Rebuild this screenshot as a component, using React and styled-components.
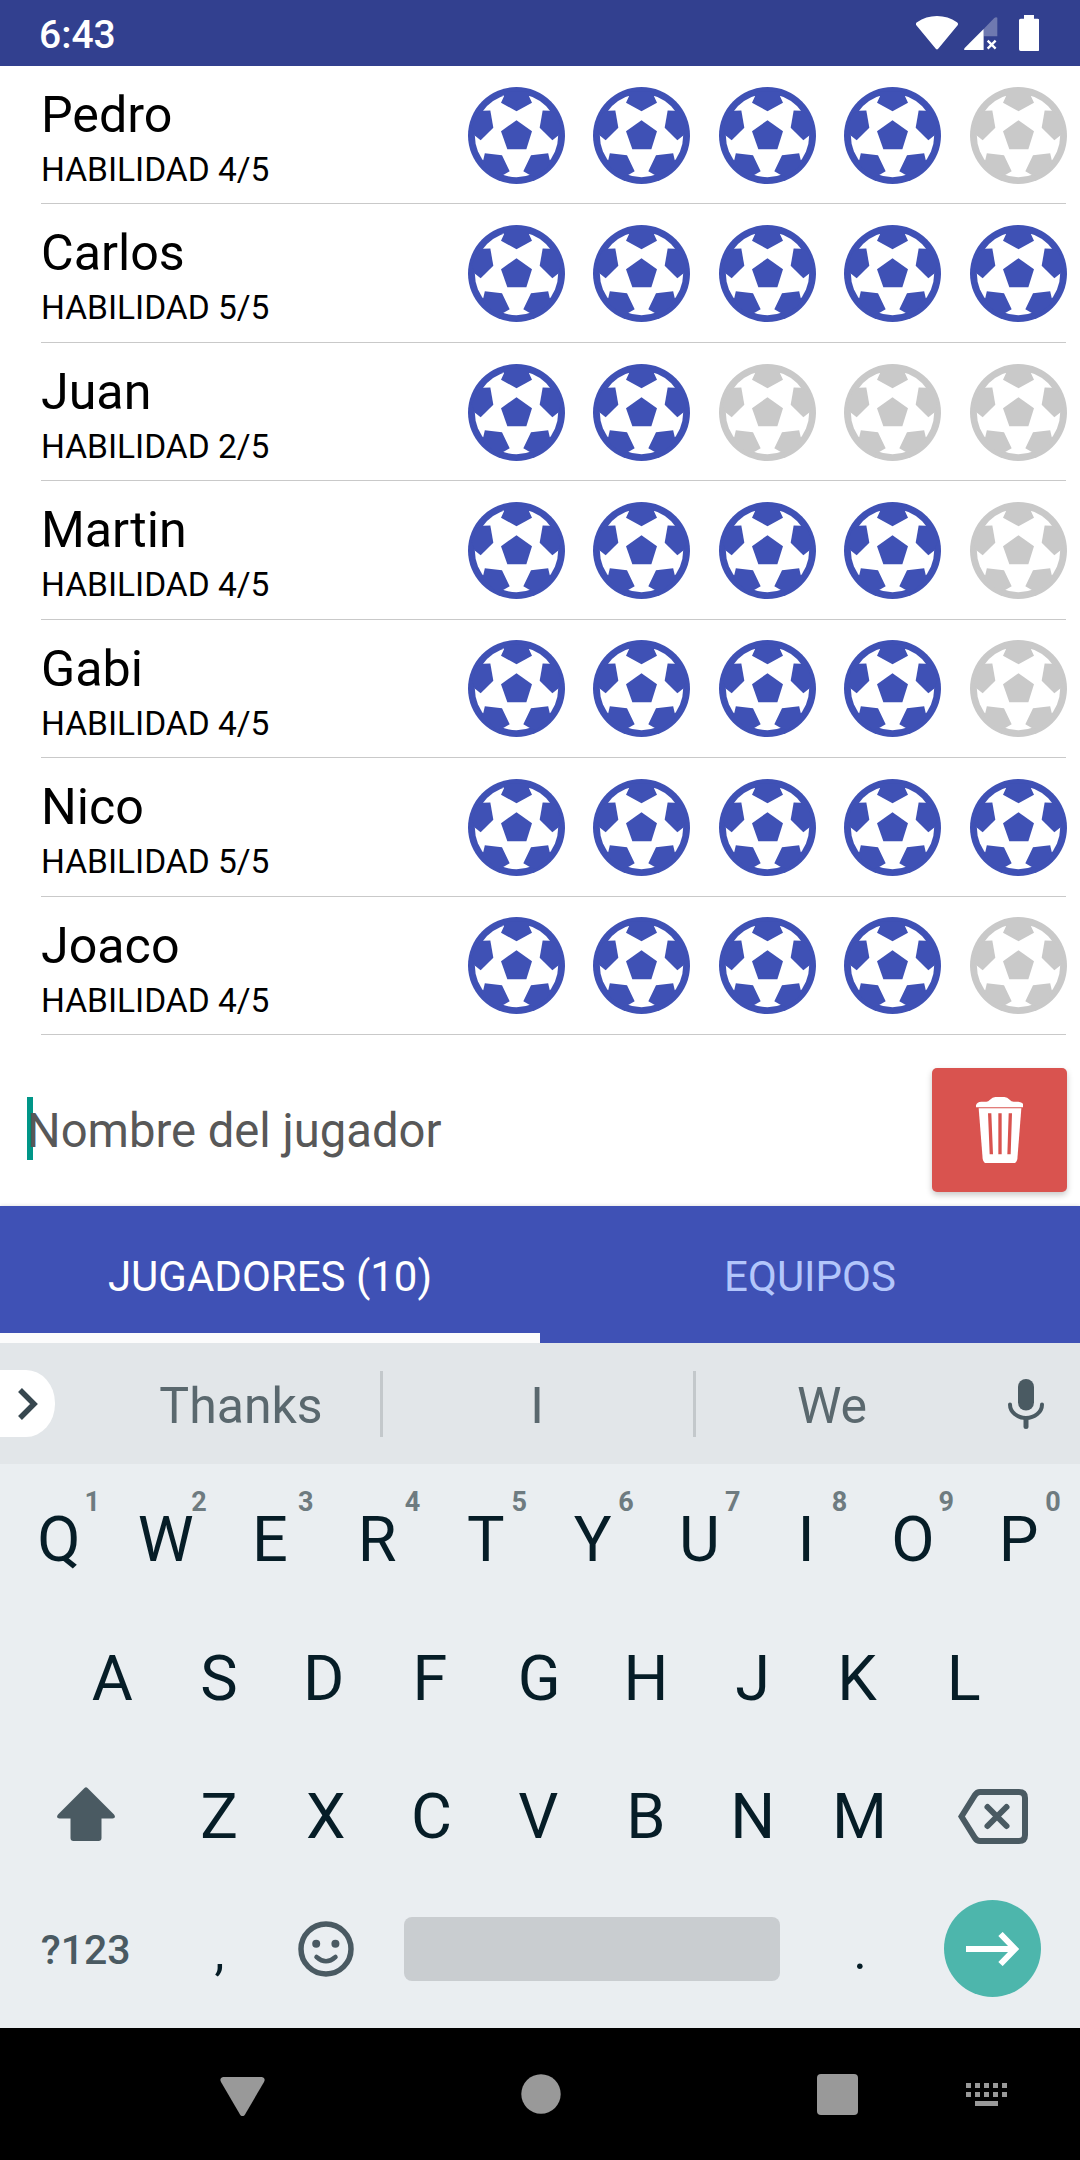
import React, { useState } from 'react';
import styled, { createGlobalStyle } from 'styled-components';

const GlobalStyle = createGlobalStyle`
* {
    box-sizing: border-box;
}

body {
    margin: 0;
    background: #ffffff;
    font-family: Roboto, sans-serif;
}

svg {
    display: block;
}
`;

// Whole phone screen
const Screen = styled.div`
display: flex;
flex-direction: column;
width: 1080px;
height: 2160px;
overflow: hidden;
background: #ffffff;
`;

// Android status bar
const StatusBar = styled.header`
display: flex;
align-items: center;
height: 66px;
padding: 0 41px 0 39px;
background: #32408f;
color: #ffffff;
`;

const Clock = styled.div`
flex: 1;
padding-top: 3px;
font-size: 39px;
font-weight: 500;
line-height: 66px;
`;

const StatusIcons = styled.div`
display: flex;
align-items: center;
`;

const SignalIcon = styled.svg`
margin: 1px 21px 0 6px;
`;

// Player list
const PlayerList = styled.ul`
display: grid;
grid-template-rows: repeat(7, 1fr);
height: 969px;
margin: 0;
padding: 0 14px 0 41px;
list-style: none;
`;

const PlayerRow = styled.li`
display: flex;
justify-content: space-between;
min-height: 0;
border-bottom: 1px solid #c9c9c9;
`;

const PlayerInfo = styled.div`
padding-top: 19px;
color: #000000;
`;

const PlayerName = styled.div`
font-size: 50.2px;
line-height: 60px;
`;

const PlayerSkill = styled.div`
margin-top: 5px;
font-size: 33.5px;
line-height: 40px;
text-transform: uppercase;
`;

const Balls = styled.div`
display: grid;
grid-template-columns: 125px 126px 125px 126px 97px;
align-items: center;
margin-right: -1px;
padding-top: 1px;
`;

const BallIcon = styled.svg`
width: 97px;
height: 97px;
color: ${(props) => (props.$active ? '#3f51b5' : '#c9c9c9')};
`;

// Form with the player name
const PlayerForm = styled.form`
display: flex;
align-items: center;
height: 171px;
padding: 33px 13px 14px 27px;
`;

const NameField = styled.div`
position: relative;
flex: 1;
height: 62px;
`;

const Caret = styled.span`
position: absolute;
top: -2px;
left: 0;
width: 6px;
height: 63px;
background: #009688;
`;

const NameInput = styled.input`
position: relative;
width: 100%;
height: 62px;
padding: 2px 0 0;
border: none;
outline: none;
background: transparent;
font-family: inherit;
font-size: 47.2px;

&::placeholder {
    color: #585858;
    opacity: 1;
}
`;

const DeleteButton = styled.button`
display: flex;
align-items: center;
justify-content: center;
width: 135px;
height: 124px;
padding: 0;
border: none;
border-radius: 5px;
background: #d9534f;
box-shadow: 0 3px 6px rgba(0, 0, 0, 0.22);
`;

// Bottom tabs
const Tabs = styled.nav`
display: flex;
height: 137px;
background: #3f51b5;
box-shadow: 0 0 4px rgba(0, 0, 0, 0.15);
`;

const Tab = styled.button`
flex: 1;
padding: 14px 0 0;
border: none;
border-bottom: 10px solid ${(props) => (props.$active ? '#fcfcfc' : 'transparent')};
background: transparent;
color: ${(props) => (props.$active ? '#ffffff' : '#b3c6fb')};
font-family: inherit;
font-size: 42px;
text-transform: uppercase;
`;

// Word suggestions above the keys
const Suggestions = styled.div`
display: grid;
grid-template-columns: 55px 47px 278px 3px 308px 2px 3px 272px 112px;
align-items: center;
height: 121px;
background: #e2e6e9;
`;

const ExpandButton = styled.div`
display: flex;
align-items: center;
grid-column: 1;
height: 67px;
padding-left: 18px;
border-radius: 0 29px 29px 0 / 0 33px 33px 0;
background: #ffffff;
`;

const Word = styled.div`
grid-column: ${(props) => props.$column};
padding-top: 5px;
color: #5a686e;
font-size: 50px;
text-align: center;
`;

const Divider = styled.div`
grid-column: ${(props) => props.$column};
height: 66px;
background: #c3c8cb;
`;

const MicIcon = styled.svg`
justify-self: center;
margin-left: 4px;
`;

// Keyboard
const Keyboard = styled.div`
height: 564px;
padding: 6px 7px 0 5.5px;
background: #eaeef1;
`;

const KeyRow = styled.div`
display: flex;
justify-content: center;
height: ${(props) => props.$height || 138.7}px;
`;

const Key = styled.div`
position: relative;
display: flex;
align-items: center;
justify-content: center;
width: ${(props) => (props.$wide ? 160 : 106.75)}px;
padding-right: ${(props) => props.$trim || 0}px;
color: #061d27;
font-size: 63px;
`;

const Hint = styled.span`
position: absolute;
top: 17px;
right: 0;
width: 40px;
color: #6e7b80;
font-size: 27px;
font-weight: 700;
line-height: 30px;
text-align: center;
`;

const ShiftIcon = styled.svg`
margin-bottom: 5px;
`;

const SymbolsKey = styled(Key)`
padding: 3px 0 0;
color: #4a5a62;
font-size: 41px;
font-weight: 500;
`;

const PunctuationKey = styled(Key)`
padding: 7px 0 0 1px;
font-size: 50px;
`;

const SpaceKey = styled.div`
align-self: center;
width: 376px;
height: 64px;
margin: 0 26px 0 25px;
border-radius: 8px;
background: #c9cdd0;
`;

const EnterKey = styled.div`
display: flex;
align-items: center;
justify-content: center;
width: 97px;
height: 97px;
border-radius: 50%;
background: #4db6ac;
`;

// Android navigation bar
const NavigationBar = styled.footer`
display: flex;
align-items: center;
height: 132px;
padding-left: 220px;
background: #000000;
`;

const NavIcon = styled.svg`
flex: none;
margin-right: ${(props) => props.$gap || 0}px;
fill: #999999;
`;

const Ball = ({ active }) => (
    <BallIcon $active={active} viewBox="84 80.5 291 291" fill="currentColor">
        <circle cx="229.5" cy="226" r="145.5" />
        <circle cx="229.5" cy="226" r="125" fill="#ffffff" />
        <path d="M229.5 180L276 213L259 267H202L183 213Z" />
        <path d="M192 108L183 128L229.5 153L276 128L267 108V95H192Z" />
        <path d="M128 152L151 151L160 203L122 240L104 226L95 200L110 160Z" />
        <path d="M331 152L308 151L299 203L337 240L355 226L364 200L349 160Z" />
        <path d="M130 299L134.5 279L186 285L209 333L191 344L170 350L125 310Z" />
        <path d="M329 299L324.5 279L273 285L250 333L268 344L289 350L334 310Z" />
    </BallIcon>
);

const initialPlayers = [
    { name: 'Pedro', skill: 4 },
    { name: 'Carlos', skill: 5 },
    { name: 'Juan', skill: 2 },
    { name: 'Martin', skill: 4 },
    { name: 'Gabi', skill: 4 },
    { name: 'Nico', skill: 5 },
    { name: 'Joaco', skill: 4 },
];

const letterTrim = { C: 2, D: 4, E: 5, F: 5, K: 5, L: 5, P: 2, R: 4, V: 2 };

const Player = ({ name, skill }) => (
    <PlayerRow>
        <PlayerInfo>
            <PlayerName>{name}</PlayerName>
            <PlayerSkill>{`Habilidad ${skill}/5`}</PlayerSkill>
        </PlayerInfo>
        <Balls>
            {[1, 2, 3, 4, 5].map((n) => (
                <Ball key={n} active={n <= skill} />
            ))}
        </Balls>
    </PlayerRow>
);

const App = () => {
    const [name, setName] = useState(''); // Name typed in the form

    return (
        <>
            <GlobalStyle />
            <Screen>
                <StatusBar>
                    <Clock>6:43</Clock>
                    <StatusIcons>
                        <svg width="42.3" height="33.7" viewBox="110 45 127 101" fill="#ffffff">
                            <path d="M176 144Q173 147 170 144L111 73Q108 67 113 64Q140 45 173 45Q206 45 233 64Q238 67 235 73Z" />
                        </svg>
                        <SignalIcon width="33.3" height="33.7" viewBox="254 50 100 101" fill="#ffffff">
                            <path d="M313 86V150H258Q252 149 256 143Z" />
                            <path d="M313 86L345 53Q350 49 354 52V108H313Z" opacity="0.3" />
                            <path d="M325 121L349 145M349 121L325 145" stroke="#ffffff" strokeWidth="7" />
                        </SignalIcon>
                        <svg width="20.3" height="36" viewBox="417 45 61 108" fill="#ffffff">
                            <path d="M432 45H462V56H473Q478 56 478 61V148Q478 153 473 153H422Q417 153 417 148V61Q417 56 422 56H432Z" />
                        </svg>
                    </StatusIcons>
                </StatusBar>

                <PlayerList>
                    {initialPlayers.map((player) => (
                        <Player key={player.name} {...player} />
                    ))}
                </PlayerList>

                <PlayerForm onSubmit={(e) => e.preventDefault()}>
                    <NameField>
                        <Caret />
                        <NameInput
                            placeholder="Nombre del jugador"
                            value={name}
                            onChange={(e) => setName(e.target.value)}
                        />
                    </NameField>
                    <DeleteButton type="button">
                        <svg width="47.7" height="66.7" viewBox="287 170 143 200" fill="#ffffff">
                            <path d="M287 201V195Q290 184 303 184H318Q324 184 328 179Q337 170 345 170H372Q381 170 388 178Q393 184 400 184H414Q428 185 430 195V201Z" />
                            <path d="M295 204H423L411 356Q409 370 396 370H322Q309 370 307 356Z" />
                            <path d="M323 219H333L338 342H328ZM354 219H364V342H354ZM385 219H395L391 342H381Z" fill="#d9534f" />
                        </svg>
                    </DeleteButton>
                </PlayerForm>

                <Tabs>
                    <Tab $active>Jugadores (10)</Tab>
                    <Tab>Equipos</Tab>
                </Tabs>

                <Suggestions>
                    <ExpandButton>
                        <svg width="20" height="32" viewBox="0 0 20 32" fill="none" stroke="#37474f" strokeWidth="5.5">
                            <path d="M2 2L16 16L2 30" />
                        </svg>
                    </ExpandButton>
                    <Word $column={3}>Thanks</Word>
                    <Divider $column={4} />
                    <Word $column={5}>I</Word>
                    <Divider $column={7} />
                    <Word $column={8}>We</Word>
                    <MicIcon width="36" height="50" viewBox="0 0 36 50" fill="none" stroke="#4a5a62" strokeLinecap="round">
                        <rect x="10" y="0" width="16" height="31.5" rx="8" fill="#4a5a62" stroke="none" />
                        <path d="M2 25.5A16 13.5 0 0 0 34 25.5" strokeWidth="4" />
                        <path d="M18 40V47.5" strokeWidth="5" />
                    </MicIcon>
                </Suggestions>

                <Keyboard>
                    <KeyRow>
                        {[...'QWERTYUIOP'].map((letter, i) => (
                            <Key key={letter} $trim={letterTrim[letter]}>
                                {letter}
                                <Hint>{(i + 1) % 10}</Hint>
                            </Key>
                        ))}
                    </KeyRow>
                    <KeyRow>
                        {[...'ASDFGHJKL'].map((letter) => (
                            <Key key={letter} $trim={letterTrim[letter]}>{letter}</Key>
                        ))}
                    </KeyRow>
                    <KeyRow>
                        <Key $wide>
                            <ShiftIcon width="58" height="54" viewBox="0 0 58 54" fill="#4a5a62">
                                <path d="M27.5 1Q29 -0.5 30.5 1L57 27.5Q59.5 31 55.5 31.5H44.5V51Q44.5 54 41.5 54H16.5Q13.5 54 13.5 51V31.5H2.5Q-1.5 31 1 27.5Z" />
                            </ShiftIcon>
                        </Key>
                        {[...'ZXCVBNM'].map((letter) => (
                            <Key key={letter} $trim={letterTrim[letter]}>{letter}</Key>
                        ))}
                        <Key $wide>
                            {/* Backspace */}
                            <svg width="70" height="55" viewBox="0 0 70 55" fill="none" stroke="#4a5a62" strokeWidth="6">
                                <path d="M22 3H61Q67 3 67 9V46Q67 52 61 52H22Q19 52 17 49L3.5 27.5L17 6Q19 3 22 3Z" />
                                <path d="M29.5 18L48.5 37M48.5 18L29.5 37" strokeLinecap="round" />
                            </svg>
                        </Key>
                    </KeyRow>
                    <KeyRow $height={125}>
                        <SymbolsKey $wide>?123</SymbolsKey>
                        <PunctuationKey>,</PunctuationKey>
                        <Key>
                            <svg width="56" height="56" viewBox="0 0 56 56" fill="none" stroke="#4a5a62">
                                <circle cx="28" cy="28" r="25" strokeWidth="5.5" />
                                <path d="M18.5 36Q28 44.5 37.5 36" strokeWidth="4.5" strokeLinecap="round" />
                                <circle cx="18.2" cy="22.8" r="4" fill="#4a5a62" stroke="none" />
                                <circle cx="37.4" cy="22.8" r="4" fill="#4a5a62" stroke="none" />
                            </svg>
                        </Key>
                        <SpaceKey />
                        <PunctuationKey>.</PunctuationKey>
                        <Key $wide>
                            <EnterKey>
                                <svg width="53" height="34" viewBox="0 0 53 34" fill="none" stroke="#ffffff" strokeWidth="6">
                                    <path d="M0 17H47M34.5 2L49 17L34.5 32" />
                                </svg>
                            </EnterKey>
                        </Key>
                    </KeyRow>
                </Keyboard>

                <NavigationBar>
                    <NavIcon $gap={256} width="45" height="43" viewBox="0 -4 45 43">
                        <path d="M3 0H42Q46 1 44 5L25 37.5Q22.5 41 20 37.5L1 5Q-1 1 3 0Z" />
                    </NavIcon>
                    <NavIcon $gap={256} width="40" height="40" viewBox="0 0 40 40">
                        <circle cx="20" cy="20" r="19.7" />
                    </NavIcon>
                    <NavIcon $gap={108} width="41" height="41" viewBox="0 0 41 41">
                        <rect width="41" height="41" rx="4" />
                    </NavIcon>
                    <NavIcon width="41" height="23" viewBox="0 0 41 23">
                        {[0, 9, 18, 27, 36].map((x) => (
                            <path key={x} d={`M${x} 0h5v5h-5zM${x} 9h5v5h-5z`} />
                        ))}
                        <path d="M9 18h23v5H9z" />
                    </NavIcon>
                </NavigationBar>
            </Screen>
        </>
    );
};

export default App;
